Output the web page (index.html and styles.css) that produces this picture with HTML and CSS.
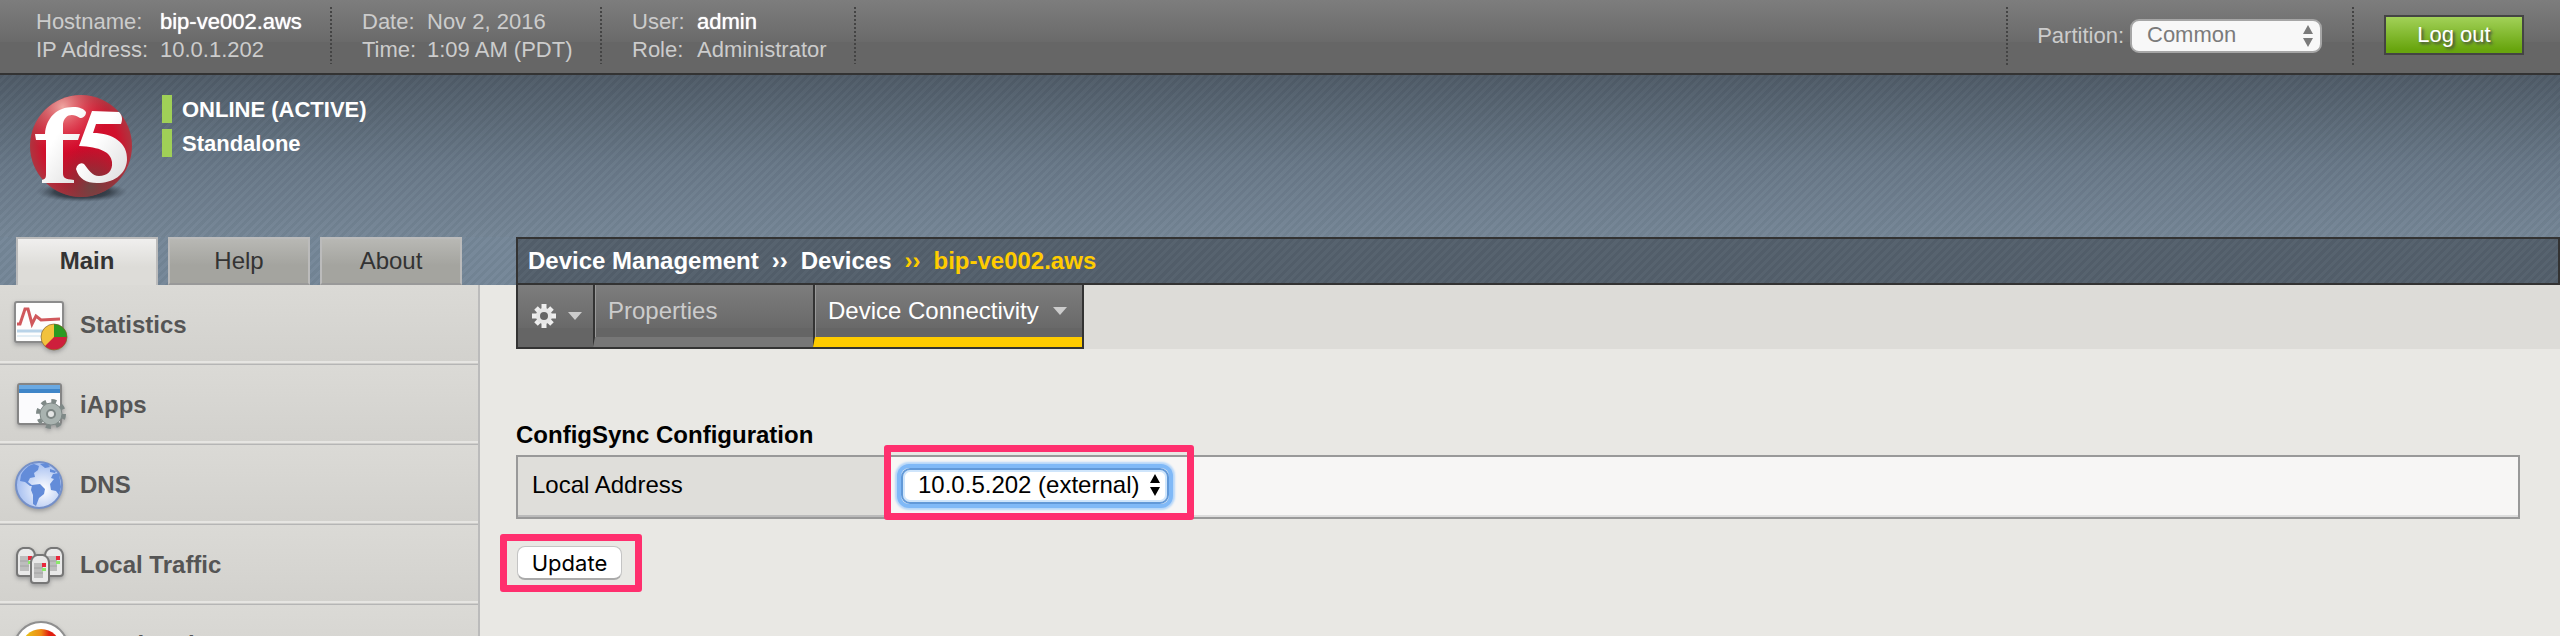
FILE: index.html
```html
<!DOCTYPE html>
<html lang="en">
<head>
<meta charset="utf-8">
<title>BIG-IP - bip-ve002.aws</title>
<link rel="stylesheet" href="styles.css">
</head>
<body>
<header class="topbar">
  <dl class="info info-host">
    <dt>Hostname:</dt><dd class="strong">bip-ve002.aws</dd>
    <dt>IP Address:</dt><dd>10.0.1.202</dd>
  </dl>
  <dl class="info info-date">
    <dt>Date:</dt><dd>Nov 2, 2016</dd>
    <dt>Time:</dt><dd>1:09 AM (PDT)</dd>
  </dl>
  <dl class="info info-user">
    <dt>User:</dt><dd class="strong">admin</dd>
    <dt>Role:</dt><dd>Administrator</dd>
  </dl>
  <div class="partition">
    <label for="partition">Partition:</label>
    <span class="select-wrap muted">
      <select id="partition"><option>Common</option></select>
      <svg class="arrows" viewBox="0 0 10 22" aria-hidden="true"><path d="M5 0l5 9H0zM5 22l5-9H0z"/></svg>
    </span>
  </div>
  <div class="logout-area"><button class="logout" type="button">Log out</button></div>
</header>

<div class="banner">
  <svg class="logo" viewBox="0 0 102 108" role="img" aria-label="f5">
    <defs>
      <radialGradient id="ball" cx="50%" cy="50%" r="52%">
        <stop offset="0" stop-color="#d4082a"/><stop offset="0.7" stop-color="#d0112c"/><stop offset="1" stop-color="#a93a43"/>
      </radialGradient>
      <radialGradient id="shine" cx="32%" cy="12%" r="45%">
        <stop offset="0" stop-color="#f5b5ae" stop-opacity="0.9"/><stop offset="1" stop-color="#e04050" stop-opacity="0"/>
      </radialGradient>
      <radialGradient id="shade" cx="60%" cy="90%" r="42%">
        <stop offset="0" stop-color="#6a4744" stop-opacity="0.95"/><stop offset="1" stop-color="#7a2a30" stop-opacity="0"/>
      </radialGradient>
      <radialGradient id="ground">
        <stop offset="0" stop-color="#1c2229"/><stop offset="0.6" stop-color="#2c343d" stop-opacity="0.8"/><stop offset="1" stop-color="#4a5663" stop-opacity="0"/>
      </radialGradient>
      <linearGradient id="mark" x1="0" y1="0" x2="1" y2="1">
        <stop offset="0.4" stop-color="#fff"/><stop offset="1" stop-color="#dcdcdc"/>
      </linearGradient>
    </defs>
    <ellipse cx="52" cy="97" rx="46" ry="10" fill="url(#ground)"/>
    <circle cx="51" cy="51" r="51" fill="url(#ball)"/>
    <circle cx="51" cy="51" r="51" fill="url(#shine)"/>
    <circle cx="51" cy="51" r="51" fill="url(#shade)"/>
    <path fill="url(#mark)" d="M5 39h10C16 23 27 12 43 12c7 0 11 2 13 5 0 4-3 6-6 6-8-6-16-3-17 6v10h17l-2 6H33v33c0 5 2 6 11 7v3H12v-3c4-1 4-3 4-7V45H6z"/>
    <path fill="url(#mark)" d="M62 16l27 1c3 3 4 7 2 12H66l-3 9c20 0 35 10 34 27-1 15-14 23-30 23-11 0-18-4-21-14 1-5 5-7 8-5 5 6 8 12 15 12 8 0 14-5 13-14-1-10-12-15-33-16z"/>
  </svg>
  <ul class="status">
    <li>ONLINE (ACTIVE)</li>
    <li>Standalone</li>
  </ul>
</div>

<div class="navrow">
  <nav class="side-tabs" aria-label="Sections">
    <a class="side-tab current" href="#main">Main</a>
    <a class="side-tab" href="#help">Help</a>
    <a class="side-tab" href="#about">About</a>
  </nav>
  <nav class="crumbs" aria-label="Breadcrumb">
    <a href="#dm">Device Management</a><span>››</span><a href="#devices">Devices</a><span class="here">››</span><a class="here" href="#device">bip-ve002.aws</a>
  </nav>
</div>

<div class="body">
  <nav class="sidebar" aria-label="Modules">
    <a class="module" href="#statistics">
      <svg viewBox="0 0 60 56" aria-hidden="true">
        <rect x="3" y="5" width="48" height="40" rx="2" fill="#fdfdfd" stroke="#8b8b8b" stroke-width="2"/>
        <path d="M5 34h44" stroke="#b9d3e8" stroke-width="3"/><path d="M5 39h44" stroke="#e2edf4" stroke-width="2"/>
        <path d="M5 27h3l5-15h3l4 15 4-8 5 4 19-1" fill="none" stroke="#d0585c" stroke-width="3"/>
        <circle cx="42" cy="40" r="13" fill="#f2c23c"/>
        <path d="M42 40V27a13 13 0 0 1 13 13z" fill="#2c9a22"/>
        <path d="M42 40h13a13 13 0 0 1-22 9z" fill="#ce1f3c"/>
        <circle cx="42" cy="40" r="13" fill="none" stroke="#6f5330" stroke-opacity="0.6" stroke-width="1"/>
      </svg>
      <span>Statistics</span>
    </a>
    <a class="module" href="#iapps">
      <svg viewBox="0 0 60 56" aria-hidden="true">
        <rect x="6" y="7" width="43" height="40" rx="2" fill="#fbfbfd" stroke="#858585" stroke-width="2"/>
        <path d="M7 8h41v8H7z" fill="#3f85c8"/><path d="M7 8h41v4H7z" fill="#6aa9e2"/>
        <circle cx="39" cy="37" r="13" fill="none" stroke="#7f8987" stroke-width="4" stroke-dasharray="5 5.2"/>
        <circle cx="39" cy="37" r="11" fill="#a9b3b0" stroke="#7f8987"/>
        <circle cx="39" cy="37" r="4" fill="#e4e6e5" stroke="#7c8583" stroke-width="2"/>
      </svg>
      <span>iApps</span>
    </a>
    <a class="module" href="#dns">
      <svg viewBox="0 0 60 56" aria-hidden="true">
        <defs><radialGradient id="sea" cx="60%" cy="60%" r="60%"><stop offset="0" stop-color="#fff"/><stop offset="1" stop-color="#a3bdf0"/></radialGradient></defs>
        <circle cx="27" cy="28" r="23" fill="url(#sea)" stroke="#7590c8" stroke-width="2"/>
        <path fill="#638cd9" d="M9 18c3-6 8-10 13-11l5 2-1 4-4 3 1 4-5 1-2 4 5 4-3 0-5-4-5-1zM20 28l8-1 5 5-1 5-5 4-3 8-3-2v-9l-2-5zM28 7l7-1 3 4-5 1zM47 16l-6 1-2 4 3 1-4 5 1 6 5 1 3 4 2-8zM38 12l6 2-1 2-5-1z"/>
      </svg>
      <span>DNS</span>
    </a>
    <a class="module" href="#ltm">
      <svg viewBox="0 0 60 56" aria-hidden="true">
        <defs><g id="server"><path d="M1 26V8q1-6 6-7h6q5 1 6 7v18q0 3-3 3H4q-3 0-3-3z" fill="#e9e9e9" stroke="#777" stroke-width="2"/><path d="M4 9h9v15H4z" fill="#bdbdbd"/><path d="M4 14h9M4 19h9" stroke="#a2a2a2"/><path d="M12 9h4v4h-4z" fill="#e8283c"/><path d="M12 14h4v3h-4z" fill="#8be86c"/></g></defs>
        <use href="#server" x="4" y="10"/><use href="#server" x="32" y="10"/><use href="#server" x="18" y="17"/>
      </svg>
      <span>Local Traffic</span>
    </a>
    <a class="module" href="#acceleration">
      <svg viewBox="0 0 60 56" aria-hidden="true">
        <defs><linearGradient id="heat"><stop offset="0" stop-color="#e6d21c"/><stop offset="0.5" stop-color="#ee8a14"/><stop offset="0.7" stop-color="#e02010"/></linearGradient></defs>
        <circle cx="29" cy="32" r="27" fill="#fff" stroke="#8f8f8f" stroke-width="2"/>
        <circle cx="29" cy="32" r="20" fill="url(#heat)"/>
      </svg>
      <span>Acceleration</span>
    </a>
  </nav>

  <main class="content">
    <div class="menubar">
      <div class="menu">
        <button class="menu-gear" type="button" aria-label="Options">
          <svg class="gear" viewBox="0 0 26 26" aria-hidden="true"><g stroke="#eee" stroke-width="5"><path d="M13 1v24M1 13h24M5 5l16 16M21 5L5 21"/></g><circle cx="13" cy="13" r="8" fill="#e6e6e6"/><circle cx="13" cy="13" r="4" fill="#666"/></svg>
          <svg class="caret" viewBox="0 0 14 8" aria-hidden="true"><path d="M0 0h14L7 8z"/></svg>
        </button>
        <a class="menu-tab" href="#properties">Properties</a>
        <a class="menu-tab selected" href="#connectivity">Device Connectivity
          <svg class="caret" viewBox="0 0 14 8" aria-hidden="true"><path d="M0 0h14L7 8z"/></svg></a>
      </div>
    </div>
    <form class="panel">
      <h1>ConfigSync Configuration</h1>
      <table class="settings">
        <tr>
          <th scope="row"><label for="address">Local Address</label></th>
          <td>
            <span class="mark mark-select">
              <span class="select-wrap focused">
                <select id="address"><option>10.0.5.202 (external)</option></select>
                <svg class="arrows" viewBox="0 0 10 22" aria-hidden="true"><path d="M5 0l5 9H0zM5 22l5-9H0z"/></svg>
              </span>
            </span>
          </td>
        </tr>
      </table>
      <div class="mark mark-update"><button class="update" type="button">Update</button></div>
    </form>
  </main>
</div>
</body>
</html>
```

FILE: styles.css
```css
* { box-sizing: border-box; }

html, body { height: 100%; }

body {
  margin: 0;
  display: flex;
  flex-direction: column;
  overflow: hidden;
  background: #e9e8e4;
  color: #000;
  font: 24px/28px "Liberation Sans", Arial, sans-serif;
}

a { color: inherit; text-decoration: none; }
button, select { font: inherit; margin: 0; }

.topbar {
  flex: none;
  display: flex;
  align-items: flex-start;
  height: 75px;
  padding: 7px 36px 0;
  border-bottom: 2px solid #333;
  background: linear-gradient(#7d7d7d, #6a6a6a 42px, #666 42px);
  color: #ccc;
  font-size: 22px;
}

/* Columns end in a dotted rule drawn from 2px squares. */
.info, .partition {
  --dots: repeating-linear-gradient(#444 0 2px, transparent 2px 4px);
  background: var(--dots) right top / 2px 100% no-repeat;
}

.info {
  display: grid;
  margin: 0 30px 0 0;
  padding-top: 1px;
}
.info-host { grid-template-columns: 124px 172px; }
.info-date { grid-template-columns: 65px 175px; }
.info-user { grid-template-columns: 65px 159px; }
.info dd { margin: 0; }
.info .strong { color: #fff; text-shadow: 0 0 1px #fff; }

.partition {
  display: flex;
  align-items: center;
  gap: 6px;
  height: 58px;
  margin-left: auto;
  padding: 0 32px 0 31px;
  background: var(--dots) left top / 2px 100% no-repeat, var(--dots) right top / 2px 100% no-repeat;
}

.logout-area { padding: 8px 0 0 30px; }
.logout {
  width: 140px;
  height: 40px;
  padding: 0;
  border: 2px solid #444;
  background: linear-gradient(#a2d158, #68a50e 90%);
  color: #fff;
  text-shadow: 2px 2px 3px #444;
}

.select-wrap { position: relative; display: inline-flex; }
.select-wrap select {
  appearance: none;
  width: 100%;
  height: 34px;
  padding: 0 20px 2px 15px;
  border: 2px solid #a6a6a6;
  border-radius: 9px;
  outline: none;
  background: #f8f8f8;
  color: inherit;
}
.arrows {
  position: absolute;
  top: 6px;
  right: 9px;
  width: 10px;
  height: 22px;
  fill: currentColor;
}
.muted { width: 192px; color: #7b7b7b; }
.focused {
  width: 268px;
  border-radius: 8px;
  box-shadow: 0 0 0 4px #80b9f7, 0 0 2px 6px #b5d6f9;
}
.focused select {
  height: 36px;
  border-color: #6299d8;
  background: #fff;
  box-shadow: inset 0 0 0 2px #cfe5fb;
}

.banner {
  flex: none;
  display: flex;
  gap: 30px;
  height: 162px;
  padding: 20px 30px 0;
}
.banner, .navrow {
  --stripes: repeating-linear-gradient(135deg, rgba(0, 0, 0, .03) 0 3px, rgba(255, 255, 255, .02) 3px 6px);
}
.banner { background: var(--stripes), linear-gradient(#4f5b67, #687888 90px, #758696); }
.logo { width: 102px; height: 108px; }

.status {
  display: flex;
  flex-direction: column;
  gap: 6px;
  margin: 0;
  padding: 0;
  list-style: none;
  color: #fff;
  font-size: 22px;
  font-weight: bold;
}
.status li {
  padding: 1px 0 0 10px;
  border-left: 10px solid #a0d057;
  line-height: 27px;
}

.navrow {
  flex: none;
  display: flex;
  height: 48px;
  background: var(--stripes), #758798;
}
.side-tabs {
  display: flex;
  gap: 10px;
  width: 516px;
  padding-left: 16px;
}
.side-tab {
  width: 142px;
  border: 2px solid #bbb;
  border-bottom-color: #999;
  background: linear-gradient(#b8b8b4, #a4a49f 60%);
  color: #333;
  line-height: 44px;
  text-align: center;
}
.side-tab.current {
  border-bottom: 0;
  background: linear-gradient(#f0efee, #dddcd8 60%);
  font-weight: bold;
}
.crumbs {
  flex: 1;
  display: flex;
  gap: 13px;
  padding-left: 10px;
  border: 2px solid #333;
  background: var(--stripes), #54606c;
  color: #fff;
  font-weight: bold;
  line-height: 44px;
}
.here { color: #fc0; }

.body { flex: 1; display: flex; min-height: 0; }

.sidebar {
  width: 480px;
  border-right: 2px solid #bbb;
  overflow: hidden;
}
.module {
  display: flex;
  align-items: center;
  gap: 8px;
  height: 80px;
  padding-left: 12px;
  border-bottom: 1px solid #b5b5b5;
  background: linear-gradient(transparent 76px, #e6e5e2 76px 78px, #cfcecb 78px), linear-gradient(#dbdad6, #d2d1cd);
  color: #555;
  font-weight: bold;
}
.module svg { width: 60px; height: 56px; filter: drop-shadow(0 2px 2px #999); }

.content { flex: 1; padding-left: 36px; }
.menubar { height: 64px; background: #dddcd8; }
.menu {
  display: flex;
  width: 568px;
  height: 64px;
  border: 2px solid #333;
  border-top: 0;
  background: linear-gradient(#7d7d7d, #696969 43px, #656565 43px);
}
.menu-gear {
  display: flex;
  align-items: center;
  gap: 11px;
  width: 75px;
  padding: 0 0 0 13px;
  border: 0;
  background: none;
}
.gear { width: 26px; height: 26px; }
.caret { width: 14px; height: 8px; fill: #ccc; }
.menu-tab {
  width: 220px;
  padding: 12px 0 0 13px;
  border-left: 2px solid #333;
  border-bottom: 10px solid #777;
  box-shadow: inset 1px 0 #999;
  color: #ccc;
}
.selected {
  flex: 1;
  display: flex;
  gap: 14px;
  border-bottom-color: #fc0;
  color: #fff;
}
.selected .caret { margin-top: 10px; }

.panel { padding: 72px 40px 0 0; }
.panel h1 { margin: 0 0 6px; font-size: 24px; line-height: 28px; }
.settings {
  width: 100%;
  border-spacing: 0;
  border: 2px solid #999;
}
.settings th, .settings td {
  height: 60px;
  padding: 0;
  border-bottom: 2px solid #bbb;
  background: #dfdeda;
  text-align: left;
  font-weight: normal;
}
.settings th { width: 366px; padding: 0 0 2px 14px; }
.settings td { background: #f7f6f5; border-bottom-color: #ddd; }

/* Highlight frames around the controls being pointed out. */
.mark { display: flex; width: max-content; border: 7px solid #ff2f6e; border-radius: 3px; }
.mark-select { margin: -12px 0 -5px; padding: 16px 18px 9px 10px; }
.mark-update { margin: 15px 0 0 -16px; padding: 5px 13px 5px 10px; }
.update {
  width: 105px;
  height: 34px;
  padding: 0;
  border: 1px solid #c4c4c4;
  border-bottom: 2px solid #aaa;
  border-radius: 8px;
  background: #fff;
  font-family: Inter, sans-serif;
  font-size: 22px;
}
```
